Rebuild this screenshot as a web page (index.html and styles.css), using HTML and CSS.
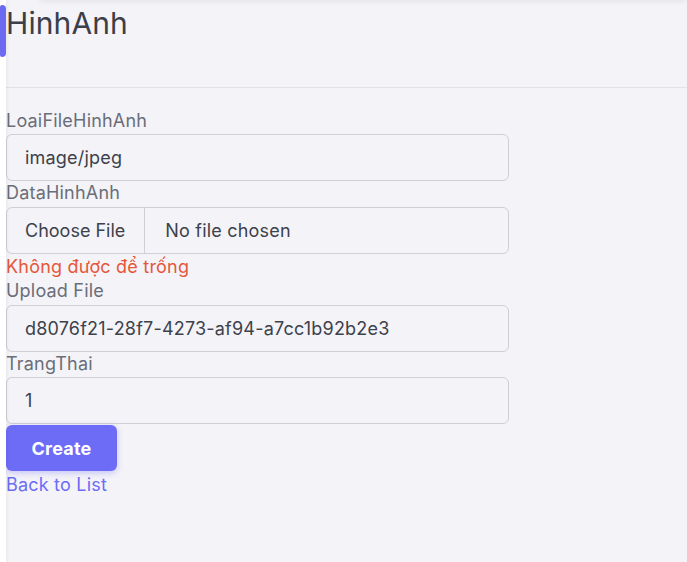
FILE: index.html
```html
<!DOCTYPE html>
<html lang="vi">
<head>
<meta charset="utf-8">
<title>HinhAnh - Create</title>
<link rel="stylesheet" href="styles.css">
</head>
<body>
<aside class="rail"><span class="rail-active"></span></aside>
<main class="main">
  <div class="topbar"></div>
  <header class="page-head">
    <h1 class="title">HinhAnh</h1>
  </header>
  <form class="form">
    <label class="label">LoaiFileHinhAnh</label>
    <div class="input">image/jpeg</div>
    <label class="label">DataHinhAnh</label>
    <div class="input file">
      <span class="file-btn">Choose File</span>
      <span class="file-name">No file chosen</span>
    </div>
    <div class="error">Không được để trống</div>
    <label class="label">Upload File</label>
    <div class="input">d8076f21-28f7-4273-af94-a7cc1b92b2e3</div>
    <label class="label">TrangThai</label>
    <div class="input">1</div>
    <button class="btn" type="button">Create</button>
    <a class="back" href="#">Back to List</a>
  </form>
</main>
</body>
</html>
```
FILE: styles.css
```css
html, body {
  margin: 0;
  height: 100%;
}
body {
  display: flex;
  font-family: Inter, "Noto Sans", sans-serif;
  font-size: 18px;
  letter-spacing: 0.2px;
  background: #f4f3f8;
  overflow: hidden;
}
.rail {
  position: relative;
  width: 6px;
  flex: none;
  background: #ffffff;
  box-shadow: 1px 0 4px rgba(0, 0, 0, 0.06);
  z-index: 2;
}
.rail-active {
  position: absolute;
  left: 0;
  top: 5px;
  width: 6px;
  height: 52px;
  background: #6d6af2;
  border-radius: 2px 4px 4px 2px;
}
.main {
  flex: 1;
  position: relative;
  background: #f4f3f8;
}
.topbar {
  position: absolute;
  left: 34px;
  right: 0;
  top: -20px;
  height: 20px;
  box-shadow: 0 1px 6px rgba(0, 0, 0, 0.08);
}
.page-head {
  height: 88px;
  border-bottom: 1px solid #e1e1e6;
  box-sizing: border-box;
}
.title {
  margin: 0;
  padding-top: 5px;
  font-size: 30px;
  font-weight: 400;
  letter-spacing: 0.1px;
  line-height: 36px;
  color: #3b3f49;
}
.form {
  display: flex;
  flex-direction: column;
  align-items: flex-start;
  padding-top: 20.5px;
}
.label {
  line-height: 24.5px;
  padding-bottom: 1px;
  color: #6a6e78;
}
.input {
  box-sizing: border-box;
  width: 503px;
  height: 47px;
  border: 1px solid #cfcfd5;
  border-radius: 6px;
  padding: 0 18px;
  display: flex;
  align-items: center;
  color: #3d414b;
}
.input.file {
  padding: 0;
}
.file-btn {
  height: 100%;
  display: flex;
  align-items: center;
  padding: 0 19px 0 18px;
  letter-spacing: 0;
  border-right: 1px solid #cfcfd5;
}
.file-name {
  padding-left: 20px;
}
.error {
  line-height: 25.5px;
  color: #e6573a;
}
.btn {
  margin-top: 1px;
  height: 46px;
  width: 111px;
  border: 0;
  border-radius: 6px;
  background: #6c6cf6;
  color: #ffffff;
  font-family: inherit;
  font-size: 18px;
  letter-spacing: 0.2px;
  font-weight: 700;
  box-shadow: 0 2px 6px rgba(108, 108, 246, 0.35);
}
.back {
  margin-top: 1px;
  line-height: 25.5px;
  color: #6c6cf6;
  text-decoration: none;
}
```
